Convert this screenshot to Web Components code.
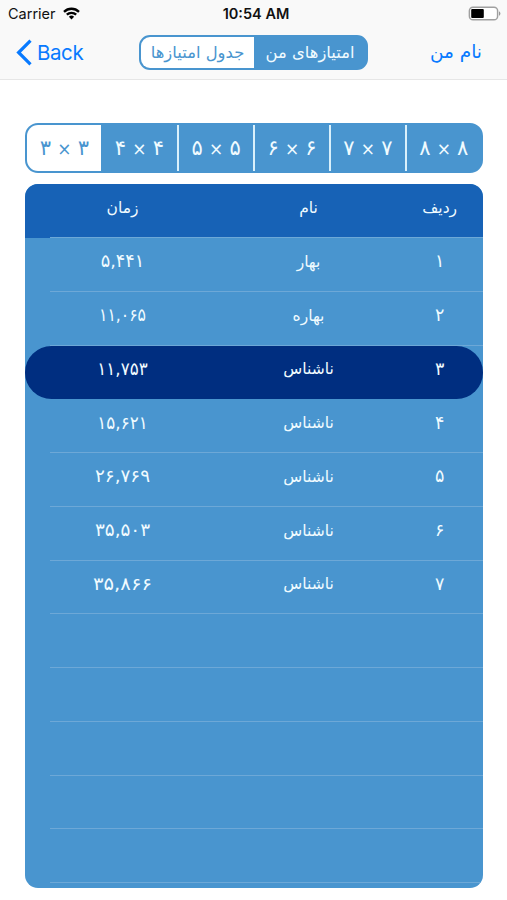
<!DOCTYPE html>
<html lang="fa">
<head>
<meta charset="utf-8">
<title>امتیازها</title>
<style>
  body {
    margin: 0;
    background: #fff;
  }
</style>
</head>
<body>
<score-page></score-page>
<script>
const define = (name, html, setup) => {
  const template = document.createElement("template");
  template.innerHTML = html;
  customElements.define(name, class extends HTMLElement {
    constructor() {
      super();
      this.attachShadow({ mode: "open" }).appendChild(
        template.content.cloneNode(true)
      );
    }
    connectedCallback() {
      if (setup) setup.call(this);
    }
  });
};

define("status-bar", `
  <style>
    :host {
      display: grid;
      grid-template-columns: 1fr auto 1fr;
      align-items: center;
      height: 27px;
      padding: 0 6px 0 8px;
      font: 14.5px/27px Inter, sans-serif;
      color: #111;
    }
    .left {
      display: flex;
      align-items: center;
      gap: 7px;
    }
    .time {
      font-weight: 600;
      padding-left: 3px;
    }
    .battery {
      justify-self: end;
    }
    svg {
      display: block;
    }
  </style>
  <div class="left">
    <span>Carrier</span>
    <svg width="17" height="13" viewBox="0 0 17 13" fill="none" stroke="#000" stroke-width="2.3">
      <path d="M1 4.8a10.8 10.8 0 0 1 15 0M3.8 7.7a6.8 6.8 0 0 1 9.4 0"/>
      <path d="M8.5 12.4 5.9 9.8a3.8 3.8 0 0 1 5.2 0z" fill="#000" stroke="none"/>
    </svg>
  </div>
  <span class="time">10:54 AM</span>
  <svg class="battery" width="33" height="15" viewBox="0 0 33 15">
    <rect x="1.4" y="1.2" width="28.2" height="12.6" rx="3.6" fill="#fff" stroke="#a0a0a0" stroke-width="1.5"/>
    <rect x="3.2" y="3" width="12.6" height="9" rx="1" fill="#000"/>
    <path d="M31 5.2v4.6q1.4-.7 1.4-2.3T31 5.2z" fill="#999"/>
  </svg>
`);

define("tab-option", `
  <style>
    :host {
      display: flex;
      align-items: center;
      justify-content: center;
      color: #f0fbff;
      white-space: pre;
      box-sizing: border-box;
    }
    :host([active]) {
      background: #fff;
      color: #4995cf;
    }
  </style>
  <span><slot></slot></span>
`);

define("nav-bar", `
  <style>
    :host {
      display: grid;
      grid-template-columns: 1fr 229px 1fr;
      height: 53px;
      border-bottom: 1px solid #e6e6e6;
      padding: 0 25px 0 16px;
      box-sizing: border-box;
      color: #087aff;
    }
    .back {
      display: flex;
      align-items: center;
      gap: 5px;
      height: 50px;
      font: 20.5px Inter, sans-serif;
      letter-spacing: -.4px;
    }
    .tabs {
      display: grid;
      grid-template-columns: 113px 1fr;
      direction: ltr;
      position: relative;
      left: 4.5px;
      margin-top: 7.5px;
      height: 35.5px;
      box-sizing: border-box;
      border: 2px solid #4995cf;
      border-radius: 11px;
      overflow: hidden;
      background: #4995cf;
      font: 16.4px "DejaVu Sans", sans-serif;
    }
    .name {
      justify-self: end;
      font: 18.5px/50px "DejaVu Sans", sans-serif;
    }
  </style>
  <div class="back">
    <svg width="16" height="27" viewBox="0 0 16 27" fill="none" stroke="#087aff" stroke-width="3.2"><path d="M14.5 1.6 2.6 13.5l11.9 11.9"/></svg>
    <span>Back</span>
  </div>
  <div class="tabs">
    <tab-option active>جدول امتیازها</tab-option>
    <tab-option>امتیازهای من</tab-option>
  </div>
  <span class="name" dir="rtl">نام من</span>
`);

define("size-picker", `
  <style>
    :host {
      display: grid;
      grid-template-columns: 74px repeat(5, 1fr);
      height: 50px;
      box-sizing: border-box;
      border: 2px solid #4995cf;
      border-radius: 13px;
      overflow: hidden;
      background: #4995cf;
      font: 21px "DejaVu Sans", sans-serif;
    }
    tab-option + tab-option + tab-option {
      border-left: 2px solid #d9f0fb;
    }
    small {
      font-size: 17px;
      word-spacing: .8px;
    }
  </style>
`, function () {
  ["۳", "۴", "۵", "۶", "۷", "۸"].forEach((n, i) => {
    const option = document.createElement("tab-option");
    option.innerHTML = `${n}<small> × </small>${n}`;
    if (i === 0) option.setAttribute("active", "");
    this.shadowRoot.appendChild(option);
  });
});

define("score-row", `
  <style>
    :host {
      display: grid;
      grid-template-columns: 195px 177px 1fr;
      height: 53.75px;
      box-sizing: border-box;
      padding-bottom: 7px;
      align-items: center;
      text-align: center;
      color: #f0fbff;
      background: linear-gradient(#6da8d7, #6da8d7) right bottom / calc(100% - 25px) 1px no-repeat;
    }
    :host([head]) {
      height: 54px;
      background-color: #1762b6;
    }
    :host([current]) {
      background: #002e80;
      border-radius: 27px;
    }
  </style>
  <slot name="time"></slot>
  <slot name="name"></slot>
  <slot name="rank"></slot>
`);

define("score-table", `
  <style>
    :host {
      display: block;
      height: 703.5px;
      border-radius: 13px;
      overflow: hidden;
      background: #4995cf;
      font: 16px "DejaVu Sans", sans-serif;
    }
    span {
      transform: scaleX(.97);
    }
    .digits {
      font-size: 18px;
      line-height: 20px;
    }
  </style>
`, function () {
  // last value is the width factor of the time, ۱ being a narrow digit
  const rows = [
    ["ردیف", "نام", "زمان"],
    ["۱", "بهار", "۵,۴۴۱", .98],
    ["۲", "بهاره", "۱۱,۰۶۵", .87],
    ["۳", "ناشناس", "۱۱,۷۵۳", .93],
    ["۴", "ناشناس", "۱۵,۶۲۱", .93],
    ["۵", "ناشناس", "۲۶,۷۶۹", 1.02],
    ["۶", "ناشناس", "۳۵,۵۰۳", 1.02],
    ["۷", "ناشناس", "۳۵,۸۶۶", 1.09],
    [], [], [], [], []
  ];
  rows.forEach((cells, i) => {
    const row = document.createElement("score-row");
    if (i === 0) row.setAttribute("head", "");
    if (i === 3) row.setAttribute("current", "");
    cells.slice(0, 3).forEach((text, j) => {
      const cell = document.createElement("span");
      cell.slot = ["rank", "name", "time"][j];
      cell.textContent = text;
      if (i > 0 && j !== 1) cell.className = "digits";
      if (i > 0 && j === 2) cell.style.transform = `scaleX(${cells[3]})`;
      row.appendChild(cell);
    });
    this.shadowRoot.appendChild(row);
  });
});

define("score-page", `
  <style>
    :host {
      display: block;
      height: 900px;
      overflow: hidden;
      direction: ltr;
    }
    header {
      background: #f9f9f9;
    }
    main {
      display: grid;
      gap: 11px;
      padding: 43px 24.3px 0 25.4px;
    }
  </style>
  <header>
    <status-bar></status-bar>
    <nav-bar></nav-bar>
  </header>
  <main>
    <size-picker></size-picker>
    <score-table></score-table>
  </main>
`);
</script>
</body>
</html>
